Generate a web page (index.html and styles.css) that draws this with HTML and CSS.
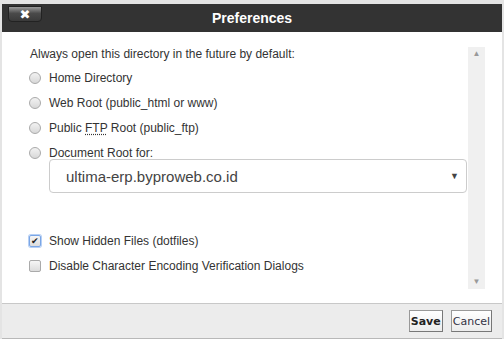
FILE: index.html
```html
<!DOCTYPE html>
<html lang="en">
<head>
    <meta charset="UTF-8">
    <title>Preferences</title>
    <link rel="stylesheet" href="styles.css">
</head>
<body>
    <div class="dialog">
        <div class="titlebar">
            <button class="close-btn" type="button">&#10006;</button>
            <h1>Preferences</h1>
        </div>
        <div class="content">
            <div class="options">
                <p class="intro">Always open this directory in the future by default:</p>
                <label class="opt"><span class="radio"></span><span>Home Directory</span></label>
                <label class="opt"><span class="radio"></span><span>Web Root (public_html or www)</span></label>
                <label class="opt"><span class="radio"></span><span>Public <abbr>FTP</abbr> Root (public_ftp)</span></label>
                <label class="opt"><span class="radio"></span><span>Document Root for:</span></label>
                <div class="select">
                    <span>ultima-erp.byproweb.co.id</span>
                    <span class="caret">&#9660;</span>
                </div>
                <label class="opt check-first"><span class="check checked">&#10004;</span><span>Show Hidden Files (dotfiles)</span></label>
                <label class="opt"><span class="check"></span><span>Disable Character Encoding Verification Dialogs</span></label>
            </div>
            <div class="scrollbar">
                <span class="arrow up">&#9650;</span>
                <span class="arrow down">&#9660;</span>
            </div>
        </div>
        <div class="footer">
            <button class="btn save" type="button">Save</button>
            <button class="btn" type="button">Cancel</button>
        </div>
    </div>
</body>
</html>
```

FILE: styles.css
```css
body {
    margin: 0;
    background: #e4e4e4;
    font-family: "Liberation Sans", Arial, sans-serif;
    height: 339px;
    overflow: hidden;
}
.dialog {
    margin: 4px 2px 0 2px;
    height: 334px;
    display: flex;
    flex-direction: column;
    background: #fff;
    border-bottom: 1px solid #b8b8b8;
}
.titlebar {
    height: 28px;
    background: #333;
    display: flex;
    align-items: center;
    position: relative;
}
.titlebar h1 {
    flex: 1;
    margin: 0;
    text-align: center;
    color: #fff;
    font-size: 14px;
    font-weight: bold;
}
.close-btn {
    position: absolute;
    left: 6px;
    top: 2px;
    width: 34px;
    height: 16px;
    border: 1px solid #222;
    border-radius: 0 0 4px 4px;
    background: linear-gradient(#9a9a9a, #4a4a4a 45%, #3a3a3a);
    color: #fff;
    font-family: "DejaVu Sans", sans-serif;
    font-size: 13px;
    line-height: 13px;
    padding: 0;
}
.content {
    flex: 1;
    display: flex;
    padding: 15px 17px 0 27px;
}
.options {
    flex: 1;
    display: flex;
    flex-direction: column;
    font-size: 12px;
    color: #333;
}
.intro {
    margin: 0 0 4px 1px;
    height: 14px;
}
.opt {
    display: flex;
    align-items: center;
    height: 25px;
}
.radio {
    width: 12px;
    height: 12px;
    border-radius: 50%;
    border: 1px solid #aaa;
    background: linear-gradient(#f2f2f2, #d8d8d8);
    margin-right: 8px;
    box-sizing: border-box;
    flex: none;
}
abbr {
    text-decoration: underline dotted;
    text-underline-offset: 2px;
}
.select {
    margin: -6px 0 0 20px;
    height: 32px;
    border: 1px solid #ccc;
    border-radius: 4px;
    display: flex;
    align-items: center;
    justify-content: space-between;
    padding: 0 7px 0 16px;
    font-size: 15px;
    color: #444;
}
.caret {
    font-size: 9px;
    color: #444;
}
.check-first {
    margin-top: 35px;
}
.check {
    width: 12px;
    height: 12px;
    border: 1px solid #aaa;
    border-radius: 2px;
    background: linear-gradient(#f6f6f6, #dcdcdc);
    margin-right: 8px;
    box-sizing: border-box;
    font-size: 9px;
    line-height: 10px;
    text-align: center;
    color: #222;
    flex: none;
}
.check.checked {
    border-color: #7aa6e6;
    box-shadow: 0 0 0 1px #b7d0f5;
}
.scrollbar {
    width: 17px;
    margin-left: 1px;
    background: #f0f0f0;
    display: flex;
    flex-direction: column;
    justify-content: space-between;
    align-items: center;
    margin-bottom: 14px;
}
.arrow {
    font-size: 8px;
    color: #999;
    line-height: 14px;
}
.footer {
    height: 34px;
    background: #ececec;
    border-top: 1px solid #c8c8c8;
    display: flex;
    justify-content: flex-end;
    align-items: center;
    gap: 8px;
    padding-right: 10px;
}
.btn {
    height: 22px;
    padding: 0 1px;
    border: 1px solid #999;
    border-right-color: #777;
    border-bottom-color: #777;
    background: linear-gradient(#fff, #ececec);
    font-family: "DejaVu Sans", Verdana, sans-serif;
    font-size: 11px;
    color: #334;
}
.save {
    font-weight: bold;
    color: #222;
}
```
